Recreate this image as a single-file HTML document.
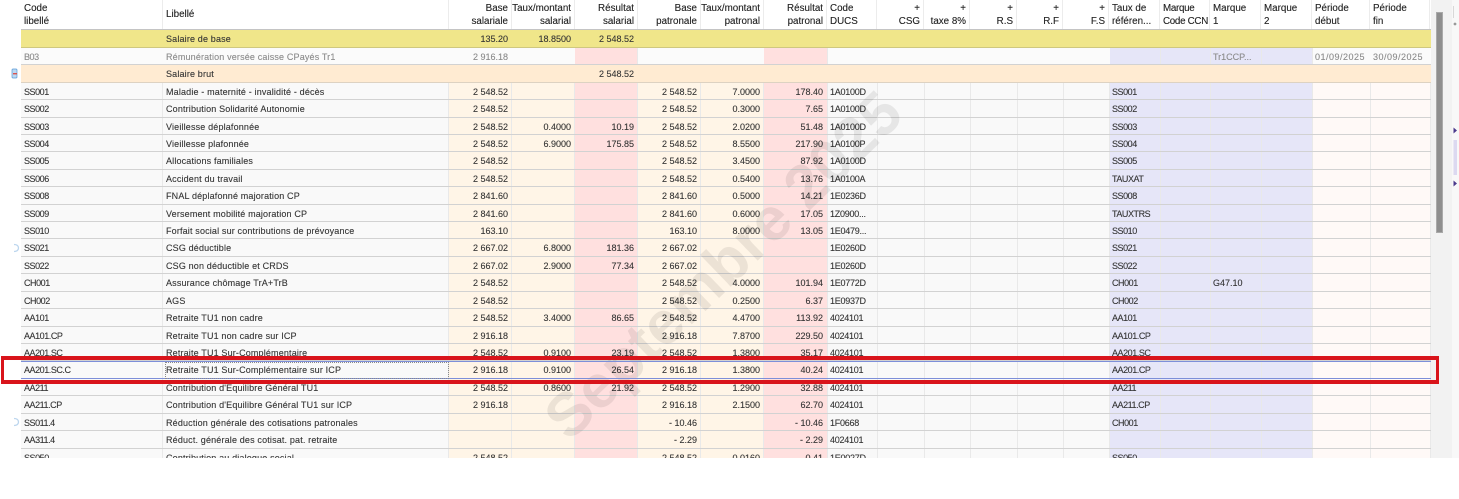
<!DOCTYPE html>
<html lang="fr"><head><meta charset="utf-8"><title>Grille</title>
<style>
html,body{margin:0;padding:0;background:#fff}
body{width:1459px;height:458px;overflow:hidden;position:relative;font-family:"Liberation Sans",sans-serif;font-size:9px;color:#333}
#g{position:absolute;left:21px;top:0;width:1410px;height:458px;overflow:hidden;filter:blur(.3px)}
.s{position:absolute;top:30px;bottom:0;border-right:1px solid #e9e9e9;box-sizing:border-box}
.r,.h{display:grid;grid-template-columns:142px 286px 63px 63px 63px 63px 63px 63px 50px 47px 46px 47px 46px 46px 51px 50px 51px 51px 58px 60px;position:relative;box-sizing:border-box}
.r{height:17.43px;line-height:17px;border-bottom:1px solid #d2d2d2;background-clip:padding-box;-webkit-text-stroke:.1px #333}
.h{height:30.4px;line-height:13px;font-size:9.8px;color:#222;background:#fff;border-bottom:1px solid #c4c4c4;-webkit-text-stroke:.12px #222}
.h i{font-style:normal;grid-row:1;padding:2px 2px 0 3px;border-right:1px solid #ececec;white-space:nowrap;overflow:hidden}
.h i.n{text-align:right;padding-right:3px;padding-left:0}
.r i{font-style:normal;grid-row:1;white-space:nowrap;overflow:hidden;padding:0 3px;position:relative;top:1px}
.k{grid-column:1;letter-spacing:-.45px}.l{grid-column:2;letter-spacing:.16px}
.a{grid-column:3}.b{grid-column:4}.c{grid-column:5}.d{grid-column:6}.e{grid-column:7}.f{grid-column:8}
.a,.b,.c,.d,.e,.f{text-align:right;padding-right:4px!important}
.g{grid-column:9;letter-spacing:-.25px}.t{grid-column:15;letter-spacing:-.45px}.m{grid-column:17}.p{grid-column:19;letter-spacing:.5px}.q{grid-column:20;letter-spacing:.5px}
.y{background:#f0e68a;border-bottom-color:#cfc87f}
.o{background:#ffebd2;border-bottom-color:#ddd2c2}
.w{color:#8a8a8a;position:relative;-webkit-text-stroke:.1px #8a8a8a}
.x{background:#fbfbfb;position:absolute;top:0;height:16.4px;z-index:0}
.w i{z-index:1}
#wm{position:absolute;left:723px;top:265px;width:0;height:0;overflow:visible}
#wm span{position:absolute;left:-300px;top:-36px;width:600px;text-align:center;font:bold 61px/72px "Liberation Sans",sans-serif;color:rgba(0,0,0,.075);transform:rotate(-44deg);white-space:nowrap}
#sel1,#sel2{position:absolute;left:21px;width:1411px;height:1px;background:#7d8fd9}
#sel1{top:361px}#sel2{top:378px}
#dot{position:absolute;left:165px;top:362px;width:282px;height:15px;border:1px dotted #8a8a8a;box-sizing:content-box}
#red{position:absolute;left:1px;top:356px;width:1438px;height:28px;box-sizing:border-box;border:4px solid #d9141b;border-left-width:3px;border-right-width:3.5px}
#side{position:absolute;left:1431px;top:0;width:21px;height:458px;background:#f2f2f2}
#thumb{position:absolute;left:1437px;top:12px;width:5px;height:219px;background:#8e8e8e;border:1px solid #a9a9a9;box-sizing:content-box;margin-left:-1px}
#far{position:absolute;left:1452px;top:0;width:7px;height:458px;background:#f8f8f8}
</style></head><body>
<div id="g">
<div class="s" style="left:0;width:142px;background:#f9f9f9"></div>
<div class="s" style="left:142px;width:286px;background:#f9f9f9"></div>
<div class="s" style="left:428px;width:63px;background:#fff5e7"></div>
<div class="s" style="left:491px;width:63px;background:#fff5e7"></div>
<div class="s" style="left:554px;width:63px;background:#ffe0df"></div>
<div class="s" style="left:617px;width:63px;background:#fff5e7"></div>
<div class="s" style="left:680px;width:63px;background:#fff5e7"></div>
<div class="s" style="left:743px;width:64px;background:#ffe0df"></div>
<div class="s" style="left:807px;width:50px;background:#f8f8f8"></div>
<div class="s" style="left:857px;width:47px;background:#f9f9f9"></div>
<div class="s" style="left:904px;width:46px;background:#f9f9f9"></div>
<div class="s" style="left:950px;width:47px;background:#f9f9f9"></div>
<div class="s" style="left:997px;width:46px;background:#f9f9f9"></div>
<div class="s" style="left:1043px;width:46px;background:#f9f9f9"></div>
<div class="s" style="left:1089px;width:51px;background:#e6e6f8"></div>
<div class="s" style="left:1140px;width:50px;background:#e6e6f8"></div>
<div class="s" style="left:1190px;width:51px;background:#e6e6f8"></div>
<div class="s" style="left:1241px;width:51px;background:#e6e6f8"></div>
<div class="s" style="left:1292px;width:58px;background:#fff9f7"></div>
<div class="s" style="left:1350px;width:60px;background:#fff9f7"></div>

<div class="h"><i>Code<br>libellé</i><i style="line-height:25px">Libellé</i><i class="n">Base<br>salariale</i><i class="n">Taux/montant<br>salarial</i><i class="n">Résultat<br>salarial</i><i class="n">Base<br>patronale</i><i class="n">Taux/montant<br>patronal</i><i class="n">Résultat<br>patronal</i><i>Code<br>DUCS</i><i class="n">+<br>CSG</i><i class="n">+<br>taxe 8%</i><i class="n">+<br>R.S</i><i class="n">+<br>R.F</i><i class="n">+<br>F.S</i><i>Taux de<br>référen...</i><i style="letter-spacing:-.3px">Marque<br>Code CCN</i><i>Marque<br>1</i><i>Marque<br>2</i><i>Période<br>début</i><i>Période<br>fin</i></div>

<div class="r y"><i class="l">Salaire de base</i><i class="a">135.20</i><i class="b">18.8500</i><i class="c">2 548.52</i></div>
<div class="r w"><div class="x" style="left:0;width:554px"></div><div class="x" style="left:617px;width:126px"></div><div class="x" style="left:807px;width:282px"></div><div class="x" style="left:1292px;width:118px"></div><i class="k">B03</i><i class="l">Rémunération versée caisse CPayés Tr1</i><i class="a">2 916.18</i><i class="m">Tr1CCP...</i><i class="p">01/09/2025</i><i class="q">30/09/2025</i></div>
<div class="r o"><i class="l">Salaire brut</i><i class="c">2 548.52</i></div>
<div class="r"><i class="k">SS001</i><i class="l">Maladie - maternité - invalidité - décès</i><i class="a">2 548.52</i><i class="d">2 548.52</i><i class="e">7.0000</i><i class="f">178.40</i><i class="g">1A0100D</i><i class="t">SS001</i></div>
<div class="r"><i class="k">SS002</i><i class="l">Contribution Solidarité Autonomie</i><i class="a">2 548.52</i><i class="d">2 548.52</i><i class="e">0.3000</i><i class="f">7.65</i><i class="g">1A0100D</i><i class="t">SS002</i></div>
<div class="r"><i class="k">SS003</i><i class="l">Vieillesse déplafonnée</i><i class="a">2 548.52</i><i class="b">0.4000</i><i class="c">10.19</i><i class="d">2 548.52</i><i class="e">2.0200</i><i class="f">51.48</i><i class="g">1A0100D</i><i class="t">SS003</i></div>
<div class="r"><i class="k">SS004</i><i class="l">Vieillesse plafonnée</i><i class="a">2 548.52</i><i class="b">6.9000</i><i class="c">175.85</i><i class="d">2 548.52</i><i class="e">8.5500</i><i class="f">217.90</i><i class="g">1A0100P</i><i class="t">SS004</i></div>
<div class="r"><i class="k">SS005</i><i class="l">Allocations familiales</i><i class="a">2 548.52</i><i class="d">2 548.52</i><i class="e">3.4500</i><i class="f">87.92</i><i class="g">1A0100D</i><i class="t">SS005</i></div>
<div class="r"><i class="k">SS006</i><i class="l">Accident du travail</i><i class="a">2 548.52</i><i class="d">2 548.52</i><i class="e">0.5400</i><i class="f">13.76</i><i class="g">1A0100A</i><i class="t">TAUXAT</i></div>
<div class="r"><i class="k">SS008</i><i class="l">FNAL déplafonné majoration CP</i><i class="a">2 841.60</i><i class="d">2 841.60</i><i class="e">0.5000</i><i class="f">14.21</i><i class="g">1E0236D</i><i class="t">SS008</i></div>
<div class="r"><i class="k">SS009</i><i class="l">Versement mobilité majoration CP</i><i class="a">2 841.60</i><i class="d">2 841.60</i><i class="e">0.6000</i><i class="f">17.05</i><i class="g">1Z0900...</i><i class="t">TAUXTRS</i></div>
<div class="r"><i class="k">SS010</i><i class="l">Forfait social sur contributions de prévoyance</i><i class="a">163.10</i><i class="d">163.10</i><i class="e">8.0000</i><i class="f">13.05</i><i class="g">1E0479...</i><i class="t">SS010</i></div>
<div class="r"><i class="k">SS021</i><i class="l">CSG déductible</i><i class="a">2 667.02</i><i class="b">6.8000</i><i class="c">181.36</i><i class="d">2 667.02</i><i class="g">1E0260D</i><i class="t">SS021</i></div>
<div class="r"><i class="k">SS022</i><i class="l">CSG non déductible et CRDS</i><i class="a">2 667.02</i><i class="b">2.9000</i><i class="c">77.34</i><i class="d">2 667.02</i><i class="g">1E0260D</i><i class="t">SS022</i></div>
<div class="r"><i class="k">CH001</i><i class="l">Assurance chômage TrA+TrB</i><i class="a">2 548.52</i><i class="d">2 548.52</i><i class="e">4.0000</i><i class="f">101.94</i><i class="g">1E0772D</i><i class="t">CH001</i><i class="m">G47.10</i></div>
<div class="r"><i class="k">CH002</i><i class="l">AGS</i><i class="a">2 548.52</i><i class="d">2 548.52</i><i class="e">0.2500</i><i class="f">6.37</i><i class="g">1E0937D</i><i class="t">CH002</i></div>
<div class="r"><i class="k">AA101</i><i class="l">Retraite TU1 non cadre</i><i class="a">2 548.52</i><i class="b">3.4000</i><i class="c">86.65</i><i class="d">2 548.52</i><i class="e">4.4700</i><i class="f">113.92</i><i class="g">4024101</i><i class="t">AA101</i></div>
<div class="r"><i class="k">AA101.CP</i><i class="l">Retraite TU1 non cadre sur ICP</i><i class="a">2 916.18</i><i class="d">2 916.18</i><i class="e">7.8700</i><i class="f">229.50</i><i class="g">4024101</i><i class="t">AA101.CP</i></div>
<div class="r"><i class="k">AA201.SC</i><i class="l">Retraite TU1 Sur-Complémentaire</i><i class="a">2 548.52</i><i class="b">0.9100</i><i class="c">23.19</i><i class="d">2 548.52</i><i class="e">1.3800</i><i class="f">35.17</i><i class="g">4024101</i><i class="t">AA201.SC</i></div>
<div class="r"><i class="k">AA201.SC.C</i><i class="l">Retraite TU1 Sur-Complémentaire sur ICP</i><i class="a">2 916.18</i><i class="b">0.9100</i><i class="c">26.54</i><i class="d">2 916.18</i><i class="e">1.3800</i><i class="f">40.24</i><i class="g">4024101</i><i class="t">AA201.CP</i></div>
<div class="r"><i class="k">AA211</i><i class="l">Contribution d'Equilibre Général TU1</i><i class="a">2 548.52</i><i class="b">0.8600</i><i class="c">21.92</i><i class="d">2 548.52</i><i class="e">1.2900</i><i class="f">32.88</i><i class="g">4024101</i><i class="t">AA211</i></div>
<div class="r"><i class="k">AA211.CP</i><i class="l">Contribution d'Equilibre Général TU1 sur ICP</i><i class="a">2 916.18</i><i class="d">2 916.18</i><i class="e">2.1500</i><i class="f">62.70</i><i class="g">4024101</i><i class="t">AA211.CP</i></div>
<div class="r"><i class="k">SS011.4</i><i class="l">Réduction générale des cotisations patronales</i><i class="d">- 10.46</i><i class="f">- 10.46</i><i class="g">1F0668</i><i class="t">CH001</i></div>
<div class="r"><i class="k">AA311.4</i><i class="l">Réduct. générale des cotisat. pat. retraite</i><i class="d">- 2.29</i><i class="f">- 2.29</i><i class="g">4024101</i></div>
<div class="r"><i class="k">SS050</i><i class="l">Contribution au dialogue social</i><i class="a">2 548.52</i><i class="d">2 548.52</i><i class="e">0.0160</i><i class="f">0.41</i><i class="g">1E0027D</i><i class="t">SS050</i></div>
</div>

<div id="wm"><span>Septembre 2025</span></div>

<svg style="position:absolute;left:10px;top:68px" width="9" height="12"><rect x="2" y="1" width="5" height="9" rx="1" fill="#bcd8f2" stroke="#5a9ad6" stroke-width=".7"/><rect x="3" y="5" width="4" height="1.4" fill="#d9534f"/></svg>
<svg style="position:absolute;left:12px;top:243px" width="8" height="10"><path d="M2 1.5C5.5 1.5 6.5 3.5 6.5 5S5.5 8.5 2 8.5" fill="none" stroke="#bcd6ee" stroke-width="1.3"/></svg>
<svg style="position:absolute;left:12px;top:417px" width="8" height="10"><path d="M2 1.5C5.5 1.5 6.5 3.5 6.5 5S5.5 8.5 2 8.5" fill="none" stroke="#bcd6ee" stroke-width="1.3"/></svg>

<div id="sel1"></div><div id="sel2"></div><div id="dot"></div>
<div id="side"></div><div id="thumb"></div>
<div id="far"></div>
<svg style="position:absolute;left:1452px;top:0" width="7" height="200">
<rect x="1" y="6" width="1" height="12" fill="#d8d8d8"/><circle cx="3" cy="24" r="1.4" fill="#999"/>
<path d="M1.5 127.5L5 130.5L1.5 133.5Z" fill="#4b3a8c"/>
<path d="M1.5 180.5L5 183.5L1.5 186.5Z" fill="#4b3a8c"/>
<rect x="1.5" y="140" width="3.5" height="35" fill="#dcd9f0"/>
</svg>
<div id="red"></div>
</body></html>
